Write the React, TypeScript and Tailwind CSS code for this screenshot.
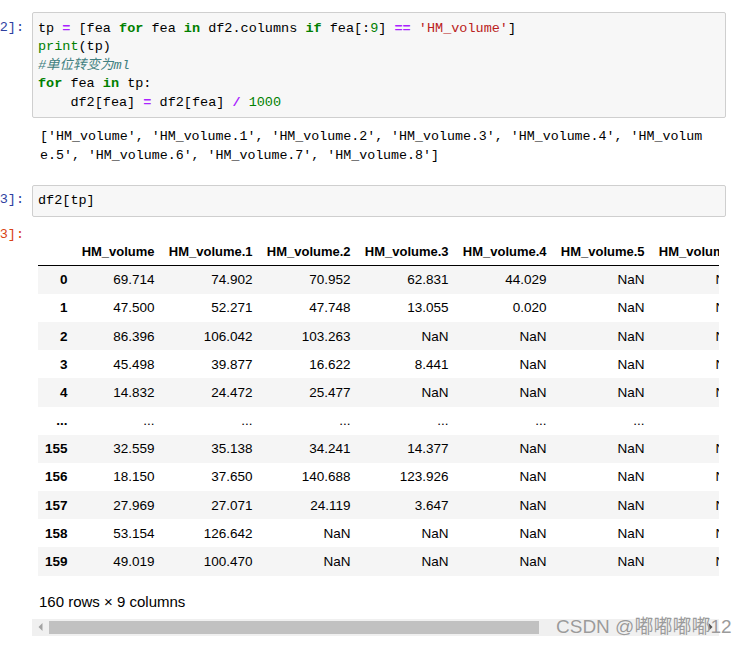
import React from "react";

const mono = "font-['Liberation_Mono','Noto_Sans_CJK_SC',monospace]";
const sans = "font-['Liberation_Sans',Arial,sans-serif]";

const cols = [
  "HM_volume",
  "HM_volume.1",
  "HM_volume.2",
  "HM_volume.3",
  "HM_volume.4",
  "HM_volume.5",
  "HM_volume.6",
  "HM_volume.7",
  "HM_volume.8",
];

const N = "NaN";
const rows: [string, string[]][] = [
  ["0", ["69.714", "74.902", "70.952", "62.831", "44.029", N, N, N, N]],
  ["1", ["47.500", "52.271", "47.748", "13.055", "0.020", N, N, N, N]],
  ["2", ["86.396", "106.042", "103.263", N, N, N, N, N, N]],
  ["3", ["45.498", "39.877", "16.622", "8.441", N, N, N, N, N]],
  ["4", ["14.832", "24.472", "25.477", N, N, N, N, N, N]],
  ["...", ["...", "...", "...", "...", "...", "...", "...", "...", "..."]],
  ["155", ["32.559", "35.138", "34.241", "14.377", N, N, N, N, N]],
  ["156", ["18.150", "37.650", "140.688", "123.926", N, N, N, N, N]],
  ["157", ["27.969", "27.071", "24.119", "3.647", N, N, N, N, N]],
  ["158", ["53.154", "126.642", N, N, N, N, N, N, N]],
  ["159", ["49.019", "100.470", N, N, N, N, N, N, N]],
];

function Prompt({ text, color }: { text: string; color: string }) {
  return (
    <div className="w-[32px] shrink-0 pr-[8px] pt-[6.5px] flex justify-end">
      <span className={`${mono} text-[13.5px] leading-[18.6px] whitespace-pre ${color}`}>{text}</span>
    </div>
  );
}

const K = ({ children }: { children: React.ReactNode }) => (
  <span className="text-[#008000] font-bold">{children}</span>
);
const O = ({ children }: { children: React.ReactNode }) => (
  <span className="text-[#aa22ff] font-bold">{children}</span>
);
const G = ({ children }: { children: React.ReactNode }) => (
  <span className="text-[#008000]">{children}</span>
);
const S = ({ children }: { children: React.ReactNode }) => (
  <span className="text-[#ba2121]">{children}</span>
);

export default function App() {
  return (
    <div className="relative w-[746px] h-[645px] bg-white overflow-hidden pt-[12px]">
      {/* Cell 2 input */}
      <div className="flex">
        <Prompt text="2]:" color="text-[#303f9f]" />
        <div className="w-[694px] border border-[#cfcfcf] bg-[#f7f7f7] rounded-[2px] pl-[5px] pt-[6.5px] pb-[4.5px]">
          <div className={`${mono} text-[13.5px] leading-[18.6px] text-black whitespace-pre`}>
            <div>
              tp <O>=</O> [fea <K>for</K> fea <K>in</K> df2.columns <K>if</K> fea[:<G>9</G>] <O>==</O>{" "}
              <S>'HM_volume'</S>]
            </div>
            <div>
              <G>print</G>(tp)
            </div>
            <div className="italic text-[#408080]">#单位转变为ml</div>
            <div>
              <K>for</K> fea <K>in</K> tp:
            </div>
            <div>
              {"    "}df2[fea] <O>=</O> df2[fea] <O>/</O> <G>1000</G>
            </div>
          </div>
        </div>
      </div>

      {/* Cell 2 output */}
      <div className="flex mt-[8px]">
        <div className="w-[32px] shrink-0" />
        <div className={`${mono} pl-[8px] pt-[1px] text-[13.3px] leading-[19px] text-black whitespace-pre`}>
          <div>['HM_volume', 'HM_volume.1', 'HM_volume.2', 'HM_volume.3', 'HM_volume.4', 'HM_volum</div>
          <div>e.5', 'HM_volume.6', 'HM_volume.7', 'HM_volume.8']</div>
        </div>
      </div>

      {/* Cell 3 input */}
      <div className="flex mt-[20px]">
        <Prompt text="3]:" color="text-[#303f9f]" />
        <div className="w-[694px] border border-[#cfcfcf] bg-[#f7f7f7] rounded-[2px] pl-[5px] pt-[6.5px] pb-[4.5px]">
          <div className={`${mono} text-[13.5px] leading-[18.6px] text-black whitespace-pre`}>df2[tp]</div>
        </div>
      </div>

      {/* Cell 3 output */}
      <div className="flex mt-[8px]">
        <div className="w-[32px] shrink-0 pr-[8px] pt-[1px] flex justify-end">
          <span className={`${mono} text-[13.5px] leading-[18.6px] whitespace-pre text-[#d84315]`}>3]:</span>
        </div>
        <div className="w-[687px] flex flex-col">
          <div className="mt-[13px] pl-[6px] overflow-hidden w-[687px]">
            <table className={`${sans} border-collapse whitespace-nowrap text-black`}>
              <thead>
                <tr>
                  <th className="px-[7px] py-[6px] text-right text-[13px] font-bold leading-[15px] border-b border-black"></th>
                  {cols.map((c) => (
                    <th
                      key={c}
                      className="px-[7.1px] py-[6px] text-right text-[13px] font-bold leading-[15px] border-b border-black"
                    >
                      {c}
                    </th>
                  ))}
                </tr>
              </thead>
              <tbody>
                {rows.map(([idx, vals], i) => (
                  <tr key={idx} className={i % 2 === 0 ? "bg-[#f5f5f5]" : "bg-white"}>
                    <th className="px-[7px] py-[6.6px] text-right text-[13.5px] font-bold leading-[15px]">{idx}</th>
                    {vals.map((v, j) => (
                      <td key={j} className="px-[7.1px] py-[6.6px] text-right text-[13.5px] leading-[15px]">
                        {v}
                      </td>
                    ))}
                  </tr>
                ))}
              </tbody>
            </table>
          </div>
          <p className={`${sans} mt-[17px] pl-[7px] text-[15px] leading-[18px] text-black`}>160 rows × 9 columns</p>
          {/* horizontal scrollbar */}
          <div className="mt-[8px] h-[17px] bg-[#f0f0f0] flex items-center">
            <div className="w-[17px] h-[17px] flex items-center justify-center">
              <svg width="5" height="8" viewBox="0 0 5 8">
                <polygon points="4.5,0 0.5,4 4.5,8" fill="#a3a3a3" />
              </svg>
            </div>
            <div className="flex-1 h-[13px]">
              <div className="w-[490px] h-[13px] bg-[#c1c1c1]" />
            </div>
            <div className="w-[17px] h-[17px] flex items-center justify-center">
              <svg width="5" height="8" viewBox="0 0 5 8">
                <polygon points="0.5,0 4.5,4 0.5,8" fill="#505050" />
              </svg>
            </div>
          </div>
        </div>
      </div>

      {/* watermark */}
      <div
        className={`absolute left-[556px] top-[613px] ${sans} text-[19px] leading-[24px] text-[#9b9b9b] whitespace-nowrap [text-shadow:0_0_1px_rgba(255,255,255,0.8)]`}
      >
        CSDN @<span className="font-['Noto_Sans_CJK_SC',sans-serif]">嘟嘟嘟嘟</span>12
      </div>
    </div>
  );
}
